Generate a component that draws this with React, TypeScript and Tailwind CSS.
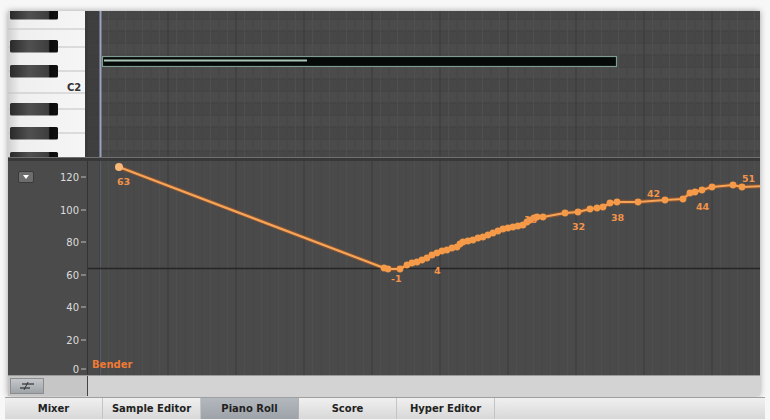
import React from 'react';

const pts: [number, number][] = [
  [119, 167], [384, 268], [388, 269], [400, 269], [407, 265], [412, 263], [417, 262], [422, 260],
  [427, 258], [432, 255], [437, 253], [442, 251], [447, 250], [452, 248], [457, 247], [460, 244],
  [463, 242], [468, 241], [473, 240], [478, 238], [483, 237], [488, 235], [493, 233], [498, 231],
  [503, 229], [508, 228], [513, 227], [518, 226], [523, 225], [527, 222], [530, 220], [534, 218],
  [537, 217], [543, 217], [565, 213], [578, 212], [590, 209], [597, 208], [603, 207], [610, 203],
  [617, 202], [638, 202], [665, 200], [683, 199], [690, 193], [695, 192], [702, 190], [712, 187],
  [733, 185], [742, 187], [766, 186],
];

const labels: [string, number, number][] = [
  ['63', 117, 185], ['-1', 391, 282], ['4', 434, 274], ['16', 524, 223], ['32', 572, 230],
  ['38', 611, 221], ['42', 647, 197], ['44', 696, 210], ['51', 742, 182],
];

const axis: [string, number][] = [
  ['120', 177], ['100', 210], ['80', 242], ['60', 275], ['40', 307], ['20', 340], ['0', 369],
];

const tabs = ['Mixer', 'Sample Editor', 'Piano Roll', 'Score', 'Hyper Editor'];

const vlines = (w: number, h: number, start: number) => {
  const out: React.ReactElement[] = [];
  let i = 0;
  for (let x = start; x < w; x += 8.5, i++) {
    const major = i % 8 === 0;
    out.push(
      <line key={x} x1={x} y1={0} x2={x} y2={h} stroke={major ? '#3b3b3b' : i % 2 ? '#4f4f4f' : '#464646'} strokeWidth={1} />
    );
  }
  return out;
};

const Keyboard = () => {
  const blacks = [-4, 29, 54, 92, 116, 141];
  const seps = [18, 36, 60, 82, 98, 122, 147];
  return (
    <svg width="78" height="146" className="block shrink-0">
      <defs>
        <linearGradient id="wk" x1="0" x2="1">
          <stop offset="0" stopColor="#d0d0d0" />
          <stop offset="0.15" stopColor="#efefef" />
          <stop offset="1" stopColor="#f6f6f6" />
        </linearGradient>
        <linearGradient id="bk" x1="0" x2="1">
          <stop offset="0" stopColor="#2a2a2a" />
          <stop offset="0.4" stopColor="#505050" />
          <stop offset="0.8" stopColor="#3e3e3e" />
          <stop offset="0.83" stopColor="#0a0a0a" />
          <stop offset="1" stopColor="#111" />
        </linearGradient>
      </defs>
      <rect x="0" y="0" width="78" height="146" fill="url(#wk)" />
      {seps.map((y) => (
        <line key={y} x1="0" y1={y} x2="78" y2={y} stroke="#c2c2c2" strokeWidth="1" />
      ))}
      {blacks.map((y) => (
        <rect key={y} x="2" y={y} width="48" height="12.5" rx="1.5" fill="url(#bk)" />
      ))}
      <text x="59" y="80" fontSize="10" fontWeight="bold" fill="#333" fontFamily="DejaVu Sans, sans-serif">C2</text>
      <line x1="77.5" y1="0" x2="77.5" y2="146" stroke="#3a3a3a" />
    </svg>
  );
};

const NoteGrid = () => {
  const rows: React.ReactElement[] = [];
  for (let y = -4, i = 0; y < 146; y += 12, i++) {
    rows.push(<rect key={y} x="0" y={y} width="672" height="12" fill={i % 2 ? '#4b4b4b' : '#474747'} />);
    rows.push(<line key={'l' + y} x1="0" y1={y} x2="672" y2={y} stroke="#424242" />);
  }
  return (
    <svg width="672" height="146" className="block shrink-0">
      <rect width="672" height="146" fill="#4a4a4a" />
      {rows}
      {vlines(672, 146, 12)}
      <rect x="0" y="0" width="11" height="146" fill="#3a3a3a" opacity="0.7" />
      <line x1="12.5" y1="0" x2="12.5" y2="146" stroke="#9aa3bd" strokeWidth="2" />
      <rect x="14.5" y="45.5" width="514" height="10" fill="#050907" stroke="#7f9c92" strokeWidth="1.2" />
      <line x1="16" y1="49.5" x2="219" y2="49.5" stroke="#a9c6b8" strokeWidth="2" />
    </svg>
  );
};

const Graph = () => {
  const d = pts.map(([x, y], i) => `${i ? 'L' : 'M'}${x} ${y}`).join(' ');
  return (
    <svg width="672" height="214" className="block shrink-0">
      <rect width="672" height="214" fill="#4a4a4a" />
      {vlines(672, 214, 12)}
      <line x1="12.5" y1="0" x2="12.5" y2="214" stroke="#555c6e" strokeWidth="1" />
      <g transform="translate(-88 -161)">
        <line x1="88" y1="268.5" x2="760" y2="268.5" stroke="#262626" strokeWidth="1.5" />
        <path d={d} fill="none" stroke="#b85a1e" strokeWidth="4.5" strokeLinejoin="round" opacity="0.5" />
        <path d={d} fill="none" stroke="#f5a458" strokeWidth="2.2" strokeLinejoin="round" />
        {pts.map(([x, y], i) => (
          <circle key={i} cx={x} cy={y} r={i === 0 ? 4 : 3.4} fill={i === 0 ? '#f7b878' : '#f49a48'} />
        ))}
        {labels.map(([t, x, y]) => (
          <text key={t} x={x} y={y} fontSize="9.5" fontWeight="bold" fill="#f2934a" fontFamily="DejaVu Sans, sans-serif">{t}</text>
        ))}
        <text x="92" y="368" fontSize="10" fontWeight="bold" fill="#f07a34" fontFamily="DejaVu Sans, sans-serif">Bender</text>
      </g>
    </svg>
  );
};

const Axis = () => (
  <div className="relative w-[80px] shrink-0 bg-[#4b4b4b] border-r border-[#333]">
    <div className="absolute left-[10px] top-[10px] flex h-[12px] w-[16px] items-center justify-center rounded-[2px] bg-[#6d6d6d] border border-[#3a3a3a]">
      <div className="h-0 w-0 border-l-[3px] border-r-[3px] border-t-[4px] border-l-transparent border-r-transparent border-t-white" />
    </div>
    <svg width="79" height="214" className="block">
      <g transform="translate(-8 -161)">
        {axis.map(([t, y]) => (
          <g key={t}>
            <text x="79" y={y + 3.5} fontSize="10" textAnchor="end" fill="#dcdcdc" fontFamily="DejaVu Sans, sans-serif">{t}</text>
            <line x1="81" y1={y} x2="86" y2={y} stroke="#bdbdbd" strokeWidth="1" />
          </g>
        ))}
      </g>
    </svg>
  </div>
);

export default function App() {
  return (
    <div className="flex h-[420px] w-[770px] flex-col overflow-hidden bg-[#f7f7f7] font-['DejaVu_Sans',sans-serif]">
      <div className="ml-[8px] mr-[10px] mt-[11px] flex flex-col shadow-[0_0_6px_rgba(0,0,0,0.35)]">
        <div className="flex h-[146px] overflow-hidden">
          <Keyboard />
          <div className="w-[2px] bg-[#3a3a3a]" />
          <NoteGrid />
        </div>
        <div className="h-[1px] bg-[#707070]" />
        <div className="h-[3px] bg-[#383838]" />
        <div className="flex h-[214px] overflow-hidden">
          <Axis />
          <Graph />
        </div>
        <div className="flex h-[21px] bg-[#d3d3d3] border-t border-[#9a9a9a]">
          <div className="flex w-[80px] items-center border-r border-[#444] bg-[#c6c6c6] pl-[2px]">
            <div className="flex h-[16px] w-[34px] items-center justify-center bg-gradient-to-b from-[#c4c8cc] to-[#9fa4aa] border border-[#8c8c8c]">
              <svg width="18" height="10" viewBox="0 0 18 10">
                <line x1="4" y1="3" x2="16" y2="3" stroke="#333" strokeWidth="1.2" />
                <line x1="2" y1="7" x2="12" y2="7" stroke="#333" strokeWidth="1.2" />
                <line x1="6" y1="9" x2="10" y2="1" stroke="#333" strokeWidth="1" />
              </svg>
            </div>
          </div>
          <div className="flex-1" />
        </div>
      </div>
      <div className="mx-[5px] mt-[1px] flex h-[22px] border-t border-[#a0a0a0] bg-gradient-to-b from-[#f0f0f0] to-[#d8d8d8]">
        {tabs.map((t) => (
          <div
            key={t}
            className={
              t === 'Piano Roll'
                ? 'flex w-[98px] items-center justify-center border-r border-[#b0b0b0] bg-gradient-to-b from-[#b3b8be] to-[#9ea3aa] text-[10px] font-bold text-[#222]'
                : 'flex w-[98px] items-center justify-center border-r border-[#c4c4c4] text-[10px] font-bold text-[#222]'
            }
          >
            {t}
          </div>
        ))}
      </div>
    </div>
  );
}
